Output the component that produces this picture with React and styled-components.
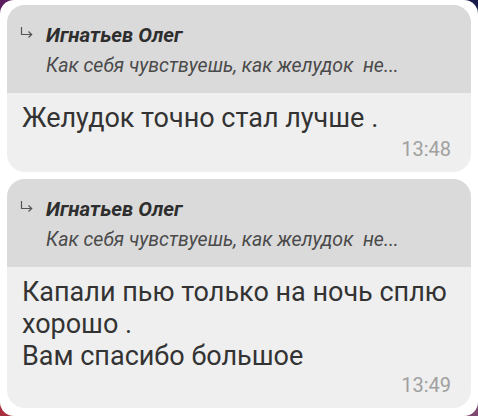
import React from 'react';
import styled, { createGlobalStyle } from 'styled-components';

const GlobalStyle = createGlobalStyle`
  html, body {
    margin: 0;
    padding: 0;
  }
  body {
    font-family: Roboto, "Noto Sans", sans-serif;
    background: #fff;
  }
`;

const messages = [
  {
    id: 1,
    author: 'Игнатьев Олег',
    quote: 'Как себя чувствуешь, как желудок  не...',
    lines: ['Желудок точно стал лучше .'],
    time: '13:48',
    timeGap: 3
  },
  {
    id: 2,
    author: 'Игнатьев Олег',
    quote: 'Как себя чувствуешь, как желудок  не...',
    lines: ['Капали пью только на ночь сплю', 'хорошо .', 'Вам спасибо большое'],
    time: '13:49',
    timeGap: 1
  }
];

const ReplyArrow = () => (
  <svg width="13" height="12" viewBox="0 0 13 12" fill="none">
    <path d="M1.5 0 V7.5 H11.5" stroke="#555" strokeWidth="1.2" />
    <path d="M8.5 4.5 L11.7 7.5 L8.5 10.5" stroke="#555" strokeWidth="1.2" />
  </svg>
);

const App = () => (
  <>
    <GlobalStyle />
    <Frame>
      <Screen>
        {messages.map(msg => (
          <Bubble key={msg.id}>
            <Quote>
              <ArrowSlot>
                <ReplyArrow />
              </ArrowSlot>
              <QuoteText>
                <Author>{msg.author}</Author>
                <QuoteLine>{msg.quote}</QuoteLine>
              </QuoteText>
            </Quote>
            <Body>
              <MessageText>
                {msg.lines.map((line, i) => (
                  <div key={i}>{line}</div>
                ))}
              </MessageText>
              <Time $gap={msg.timeGap}>{msg.time}</Time>
            </Body>
          </Bubble>
        ))}
      </Screen>
    </Frame>
  </>
);

const Frame = styled.div`
  width: 478px;
  height: 416px;
  background:
    linear-gradient(to right, #5c1d5f 0%, #5c1d5f 50%, #1a1c4c 50%, #1a1c4c 100%) top / 100% 50% no-repeat,
    linear-gradient(to right, #a8303e 0%, #a8303e 50%, #7e4a72 50%, #7e4a72 100%) bottom / 100% 50% no-repeat;
`;

const Screen = styled.div`
  box-sizing: border-box;
  width: 100%;
  height: 100%;
  background: #fff;
  border-radius: 14px;
  padding: 5px 7px 0 7px;
  display: flex;
  flex-direction: column;
  gap: 7px;
`;

const Bubble = styled.div`
  border-radius: 18px;
  overflow: hidden;
  background: #efefef;
`;

const Quote = styled.div`
  background: #dadada;
  height: 88px;
  box-sizing: border-box;
  padding: 18px 12px 0 13px;
  display: flex;
  gap: 13px;
`;

const ArrowSlot = styled.div`
  padding-top: 1px;
`;

const QuoteText = styled.div`
  display: flex;
  flex-direction: column;
  gap: 7px;
`;

const Author = styled.div`
  font-size: 20.5px;
  line-height: 24px;
  font-weight: 700;
  font-style: italic;
  color: #2e2e2e;
`;

const QuoteLine = styled.div`
  font-size: 19.5px;
  line-height: 24px;
  font-style: italic;
  color: #4a4a4a;
  white-space: pre;
`;

const Body = styled.div`
  padding: 9px 20px 11px 15px;
  display: flex;
  flex-direction: column;
`;

const MessageText = styled.div`
  font-size: 27px;
  line-height: 32px;
  color: #333;
`;

const Time = styled.div`
  align-self: flex-end;
  margin-top: ${({ $gap }) => $gap}px;
  font-size: 20px;
  line-height: 24px;
  color: #a0a0a0;
`;

export default App;
